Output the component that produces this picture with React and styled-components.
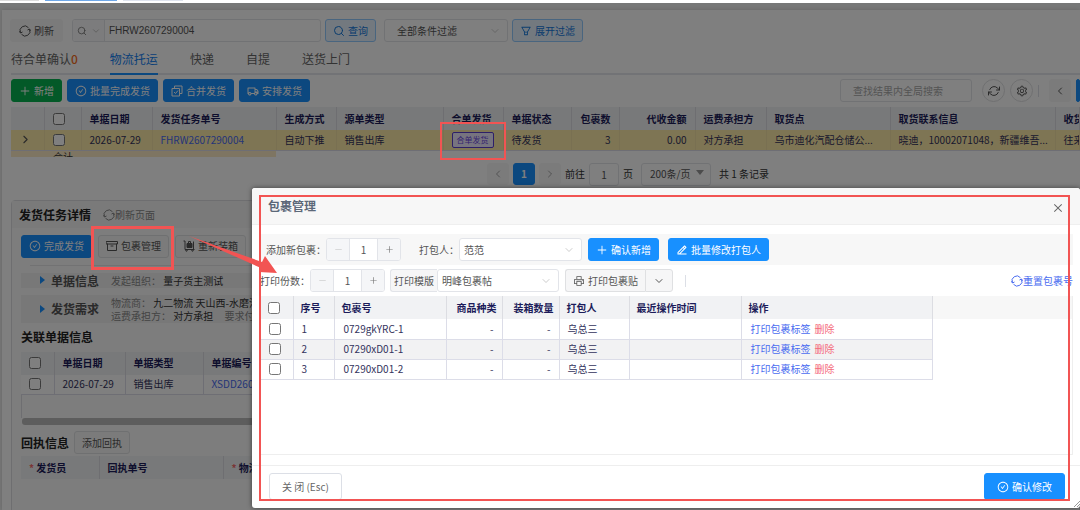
import React, { Component } from 'react';
import styled, { createGlobalStyle } from 'styled-components';
import {
    AiOutlineCheckCircle,
    AiOutlineClose,
    AiOutlineFilter,
    AiOutlinePlus,
    AiOutlineMinus,
    AiOutlinePrinter,
    AiOutlineSetting
} from 'react-icons/ai';
import { RiEdit2Line, RiTruckLine } from 'react-icons/ri';
import { FiArchive, FiChevronDown, FiChevronLeft, FiChevronRight, FiRefreshCw, FiSearch } from 'react-icons/fi';

const GlobalStyle = createGlobalStyle`
    * { box-sizing: border-box; }
    body {
        margin: 0;
        font-family: "Noto Sans CJK SC", sans-serif;
        font-size: 10px;
        line-height: 16px;
        color: #333;
    }
    button, input, select { font: inherit; color: inherit; margin: 0; }
    a { color: #4a6cf0; text-decoration: none; }
`;

const Shell = styled.div`
    display: flex;
    flex-direction: column;
    height: 100vh;
    overflow: hidden;
    background: #fff;
`;

const TabStrip = styled.nav`
    display: flex;
    gap: 6px;
    height: 3px;
    flex: none;
`;

const TabEdge = styled.span`
    width: ${props => props.width};
    height: 1px;
    background: ${props => props.color};
`;

const Workspace = styled.main`
    position: relative;
    flex: 1;
    min-height: 0;
    overflow: hidden;
    padding: 7px 0 0 2px;
    background: #eef0f0;
`;

const Page = styled.div`
    height: 100%;
    padding-left: 8px;
    background: #fff;
    box-shadow: 0 0 4px #ccc;
`;

const Bar = styled.div`
    display: flex;
    align-items: center;
    gap: ${props => props.gap || '5px'};
    padding: ${props => props.pad || '0'};
`;

const tones = {
    primary: 'color: #fff; background: #1890ff; border-color: #1890ff;',
    success: 'color: #fff; background: #07b350; border-color: #07b350;',
    soft: 'color: #1478dc; background: #e6f3ff; border-color: #93caff;',
    plain: 'color: #555; background: #f6f6f7; border-color: #dfe0e2;',
    flat: 'color: #555; background: #f6f6f7; border-color: #f6f6f7;',
    white: 'color: #666; background: #fff; border-color: #dcdfe6;'
};

const Button = styled.button`
    display: inline-flex;
    align-items: center;
    justify-content: center;
    gap: 3px;
    flex: none;
    height: ${props => props.$height || '23px'};
    padding: 0 ${props => props.$pad || '7px'};
    border: 1px solid;
    border-radius: 3px;
    white-space: nowrap;
    ${props => tones[props.$tone || 'plain']}
    svg { width: 12px; height: 12px; }
`;

const RoundButton = styled(Button)`
    width: 23px;
    padding: 0;
    border-radius: 50%;
    background: #fff;
`;

const SplitButton = styled.div`
    display: flex;
    flex: none;
    button:first-child { border-right: 0; border-radius: 3px 0 0 3px; }
    button:last-child { border-radius: 0 3px 3px 0; }
`;

const Group = styled.div`
    display: flex;
    align-items: center;
    flex: none;
    height: 23px;
    width: ${props => props.width || 'auto'};
    border: 1px solid #e2e4e9;
    border-radius: 3px;
    background: #fff;
    overflow: hidden;
`;

const SearchKind = styled.button`
    display: flex;
    align-items: center;
    justify-content: center;
    gap: 4px;
    width: 32px;
    height: 100%;
    padding: 0;
    border: 0;
    border-right: 1px solid #e2e4e9;
    background: #f9f9fa;
    color: #777;
`;

const TextInput = styled.input`
    flex: 1;
    min-width: 0;
    height: 100%;
    padding: 0 ${props => props.$pad || '4px'};
    border: 0;
    outline: 0;
    background: none;
    color: #555;
    font-family: ${props => (props.$latin ? '"Liberation Sans", sans-serif' : 'inherit')};
    text-align: ${props => props.$align || 'left'};
    &::placeholder { color: #a8a8a8; }
`;

const SelectBox = styled.div`
    position: relative;
    flex: none;
    width: ${props => props.width};
    height: 23px;
    svg {
        position: absolute;
        right: 7px;
        top: 6px;
        color: #999;
        pointer-events: none;
    }
`;

const NativeSelect = styled.select`
    appearance: none;
    width: 100%;
    height: 100%;
    padding: 0 ${props => props.$pad || '4px'};
    border: 1px solid #e2e4e9;
    border-radius: 3px;
    background: #fff;
    color: #555;
`;

const Tabs = styled.nav`
    display: flex;
    gap: 32px;
    height: 33px;
    border-bottom: 2px solid #e4e7ed;
    margin-left: 1px;
`;

const Tab = styled.a`
    height: 33px;
    font-size: 12px;
    line-height: 33px;
    color: ${props => (props.$active ? '#1280f0' : '#666')};
    border-bottom: 2px solid ${props => (props.$active ? '#1890ff' : 'transparent')};
    b { color: #f56c1c; font-weight: 500; }
`;

const Spacer = styled.div`
    flex: 1;
`;

const Divider = styled.span`
    width: 1px;
    height: 12px;
    margin: 0 ${props => props.gap || '0'};
    background: #dcdfe6;
`;

const Rule = styled.hr`
    height: 1px;
    margin: 7px 0 7px 9px;
    border: 0;
    background: #e4e4e6;
`;

const Table = styled.table`
    width: ${props => props.width || '100%'};
    table-layout: fixed;
    border-collapse: collapse;
`;

const Th = styled.th`
    height: 23px;
    padding: 0 ${props => props.$pad || '8px'};
    overflow: hidden;
    white-space: nowrap;
    text-align: ${props => props.align || 'left'};
    font-weight: 700;
    color: #1c1c5a;
    background: #f1f2f4;
    border-right: 1px solid #dcdde2;
    input { display: block; width: 12px; height: 12px; }
    i { color: #f56c6c; font-style: normal; }
`;

const Td = styled.td`
    height: 20px;
    padding: 0 ${props => props.$pad || '8px'};
    overflow: hidden;
    white-space: nowrap;
    text-align: ${props => props.align || 'left'};
    color: #33335c;
    background: ${props => props.$tint || '#fff'};
    border-right: 1px solid ${props => (props.$tint === '#fdeaa8' ? '#f2e0a4' : '#dcdde8')};
    border-bottom: 1px solid #dcdde8;
    input { display: block; width: 12px; height: 12px; }
    > svg { display: block; color: #555; }
`;

const SummaryRow = styled.div`
    width: 265px;
    height: 6px;
    margin-left: 1px;
    padding-left: 42px;
    overflow: hidden;
    line-height: 12px;
    background: #fdebc4;
`;

const MergeTag = styled.span`
    display: inline-block;
    height: 16px;
    padding: 0 4px;
    border: 1px solid #5a3fd0;
    border-radius: 2px;
    background: #efe9ff;
    color: #6a48e0;
    font-size: 8px;
    line-height: 14px;
    vertical-align: middle;
`;

const Detail = styled.section`
    margin: 14px 0 0 1px;
    height: 400px;
    border: 1px solid #dcdde0;
    border-radius: 4px;
    background: #fbfbfb;
`;

const DetailHead = styled.header`
    display: flex;
    align-items: center;
    gap: 12px;
    height: 27px;
    padding: 2px 7px 0;
    background: #f5f5f5;
    color: #888;
`;

const Heading = styled.h2`
    margin: 0;
    font-size: 12px;
    line-height: 18px;
    font-weight: 700;
    color: #222;
`;

const DetailBody = styled.div`
    padding: 7px 0 0 9px;
`;

const Folds = styled.div`
    display: flex;
    flex-direction: column;
    gap: 7px;
    padding-bottom: 5px;
`;

const Fold = styled.div`
    display: grid;
    grid-template-columns: 78px 1fr;
    align-items: center;
    gap: 12px;
    height: ${props => props.height};
    background: #f0f0f0;
    color: #333;
    line-height: 13px;
    white-space: nowrap;
    overflow: hidden;
    em { font-style: normal; color: #888; }
`;

const FoldTitle = styled.div`
    display: flex;
    align-items: center;
    justify-content: flex-end;
    gap: 4px;
    font-size: 12px;
    font-weight: 700;
    color: #555;
`;

const ScrollBody = styled.div`
    height: 23px;
    border-left: 1px solid #dcdde2;
`;

const ScrollThumb = styled.div`
    height: 7px;
    margin-left: 1px;
    border-radius: 3px;
    background: #bbb;
`;

const Backdrop = styled.div`
    position: absolute;
    inset: 0;
    background: rgba(0, 0, 0, 0.5);
`;

const Modal = styled.section`
    position: absolute;
    left: 252px;
    right: 0;
    top: 188px;
    bottom: 2px;
    display: flex;
    flex-direction: column;
    border-radius: 3px;
    background: #fff;
    box-shadow: 0 0 5px rgba(0, 0, 0, 0.5);
`;

const ModalHead = styled.header`
    display: flex;
    align-items: center;
    justify-content: space-between;
    height: 37px;
    flex: none;
    padding: 0 16px;
    border-bottom: 1px solid #efefef;
    border-radius: 3px 3px 0 0;
    background: #f7f7f7;
`;

const ModalTitle = styled.h1`
    margin: 0;
    font-size: 12px;
    line-height: 18px;
    font-weight: 700;
    color: #5c6879;
`;

const CloseButton = styled.button`
    display: flex;
    padding: 4px 0 0;
    border: 0;
    background: none;
    color: #666;
`;

const ModalBody = styled.div`
    display: flex;
    flex-direction: column;
    flex: 1;
    min-height: 0;
    padding: 9px 7px 0 8px;
`;

const ModalBar = styled.div`
    display: flex;
    align-items: center;
    height: 31px;
    flex: none;
    padding-left: ${props => (props.$shade ? '6px' : '0')};
    background: ${props => (props.$shade ? '#f7f7f7' : '#fff')};
    color: #555;
`;

const StepButton = styled.button`
    display: flex;
    align-items: center;
    justify-content: center;
    width: 23px;
    height: 100%;
    padding: 0;
    border: 0;
    background: #f5f6f8;
    color: ${props => (props.disabled ? '#bbb' : '#777')};
    &:first-child { border-right: 1px solid #e2e4e9; }
    &:last-child { border-left: 1px solid #e2e4e9; }
`;

const Addon = styled.label`
    height: 23px;
    padding: 0 3px;
    line-height: 21px;
    border: 1px solid #e2e4e9;
    border-right: 0;
    border-radius: 3px 0 0 3px;
    background: #f6f6f7;
`;

const Gap = styled.span`
    flex: none;
    width: ${props => props.width};
`;

const ResetLink = styled.a`
    display: flex;
    align-items: center;
`;

const Grid = styled.div`
    flex: 1;
    min-height: 0;
    border-right: 1px solid #eee;
    border-bottom: 1px solid #eee;
    background: linear-gradient(#f7f7f7 23px, #fff 23px);
    a + a { margin-left: 4px; color: #f56c7c; }
`;

const ModalFoot = styled.footer`
    display: flex;
    justify-content: space-between;
    flex: none;
    height: 43px;
    margin-top: 10px;
    padding: 7px 15px 0 17px;
    border-top: 1px solid #eee;
`;

const Mark = styled.div`
    position: absolute;
    left: ${props => props.$left};
    top: ${props => props.$top};
    right: ${props => props.$right || 'auto'};
    bottom: ${props => props.$bottom || 'auto'};
    width: ${props => props.$width || 'auto'};
    height: ${props => props.$height || 'auto'};
    border: ${props => props.$line || '3px'} solid #f25453;
    pointer-events: none;
`;

const Arrow = styled.svg`
    position: absolute;
    left: 185px;
    top: 230px;
    pointer-events: none;
`;

const Grip = styled.svg`
    position: absolute;
    right: 0;
    bottom: 1px;
`;

const CycleIcon = ({ size = 12 }) => (
    <svg width={size} height={size} viewBox="0 0 24 24" fill="none" stroke="currentColor" strokeWidth="2">
        <path d="M3 15.5A9.5 9.5 0 0 1 19 5.5M21 8.5A9.5 9.5 0 0 1 5 18.5" />
        <path d="M0.5 12.5L3 16l4-2M23.5 11.5L21 8l-4 2" />
    </svg>
);

const MergeIcon = () => (
    <svg viewBox="0 0 24 24" fill="none" stroke="currentColor" strokeWidth="2">
        <path d="M7 6V2h15v15h-4M2 7h15v15H2zM6 14l3 3 5-6" />
    </svg>
);

const LuggageIcon = () => (
    <svg viewBox="0 0 24 24" fill="none" stroke="currentColor" strokeWidth="2">
        <path d="M1 2h3v17h19M21 3v16" />
        <path d="M8 7h10v8H8z" fill="currentColor" />
        <path d="M11 6V3h4v3" />
        <circle cx="7" cy="21" r="1.5" />
        <circle cx="19" cy="21" r="1.5" />
    </svg>
);

const Triangle = ({ down }) => (
    <svg width="8" height="8" viewBox="0 0 8 8" fill={down ? '#999' : '#1890ff'}>
        <path d={down ? 'M0 1h8L4 6z' : 'M1 0v8l5-4z'} />
    </svg>
);

const Select = ({ label, width, pad, children, down }) => (
    <SelectBox width={width}>
        <NativeSelect aria-label={label} $pad={pad}><option>{children}</option></NativeSelect>
        {down ? <Triangle down /> : <FiChevronDown size={12} strokeWidth={1} />}
    </SelectBox>
);

const Stepper = ({ id }) => (
    <Group width="75px">
        <StepButton disabled aria-label="减少"><AiOutlineMinus size={9} /></StepButton>
        <TextInput id={id} defaultValue="1" $align="center" />
        <StepButton aria-label="增加"><AiOutlinePlus size={9} /></StepButton>
    </Group>
);

const Cols = ({ widths }) => (
    <colgroup>
        {widths.map((width, index) => <col key={index} style={{ width: width || 'auto' }} />)}
    </colgroup>
);

const yellow = '#fdeaa8';

const TaskTable = () => (
    <Table>
        <Cols widths={[33, 37, 71, 124, 60, 107, 60, 68, 48, 76, 71, 124, 165, null]} />
        <thead>
            <tr>
                <Th /><Th><input type="checkbox" aria-label="全选" /></Th>
                <Th>单据日期</Th><Th>发货任务单号</Th><Th>生成方式</Th><Th>源单类型</Th>
                <Th>合单发货</Th><Th>单据状态</Th><Th align="right">包裹数</Th><Th align="right">代收金额</Th>
                <Th>运费承担方</Th><Th>取货点</Th><Th>取货联系信息</Th><Th>收货点</Th>
            </tr>
        </thead>
        <tbody>
            <tr>
                <Td $tint={yellow}><FiChevronRight size={13} /></Td>
                <Td $tint={yellow}><input type="checkbox" aria-label="选择" /></Td>
                <Td $tint={yellow}>2026-07-29</Td>
                <Td $tint={yellow}><a href="#task">FHRW2607290004</a></Td>
                <Td $tint={yellow}>自动下推</Td>
                <Td $tint={yellow}>销售出库</Td>
                <Td $tint={yellow}><MergeTag>合单发货</MergeTag></Td>
                <Td $tint={yellow}>待发货</Td>
                <Td $tint={yellow} align="right">3</Td>
                <Td $tint={yellow} align="right">0.00</Td>
                <Td $tint={yellow}>对方承担</Td>
                <Td $tint={yellow}>乌市迪化汽配仓储公...</Td>
                <Td $tint={yellow}>晓迪，10002071048，新疆维吾...</Td>
                <Td $tint={yellow}>往来</Td>
            </tr>
        </tbody>
    </Table>
);

const TaskList = () => (
    <>
        <Bar pad="9px 0 0" gap="4px">
            <Button $tone="flat" $pad="8px"><CycleIcon />刷新</Button>
            <Gap width="1px" />
            <Group width="249px">
                <SearchKind aria-label="搜索类型">
                    <FiSearch size={10} /><FiChevronDown size={10} strokeWidth={1} />
                </SearchKind>
                <TextInput aria-label="单号" defaultValue="FHRW2607290004" $latin />
            </Group>
            <Button $tone="soft"><FiSearch />查询</Button>
            <Gap width="0" />
            <Select label="过滤" width="124px" pad="12px">全部条件过滤</Select>
            <Button $tone="soft"><AiOutlineFilter />展开过滤</Button>
        </Bar>
        <Tabs>
            <Tab href="#merge">待合单确认<b>0</b></Tab>
            <Tab href="#logistics" $active>物流托运</Tab>
            <Tab href="#express">快递</Tab>
            <Tab href="#pickup">自提</Tab>
            <Tab href="#door">送货上门</Tab>
        </Tabs>
        <Bar pad="4px 0 5px 1px">
            <Button $tone="success"><AiOutlinePlus />新增</Button>
            <Button $tone="primary"><AiOutlineCheckCircle />批量完成发货</Button>
            <Button $tone="primary"><MergeIcon />合并发货</Button>
            <Button $tone="primary"><RiTruckLine />安排发货</Button>
            <Spacer />
            <Group width="132px"><TextInput aria-label="查找" placeholder="查找结果内全局搜索" $pad="12px" /></Group>
            <Gap width="0" />
            <RoundButton aria-label="刷新"><FiRefreshCw /></RoundButton>
            <RoundButton aria-label="设置"><AiOutlineSetting /></RoundButton>
            <Divider />
            <Gap width="0" />
            <Button $tone="flat" $pad="4px" aria-label="上一页"><FiChevronLeft /></Button>
            <Button $tone="primary" $pad="1px" aria-label="第一页" />
        </Bar>
        <Bar pad="0 0 0 1px"><TaskTable /></Bar>
        <SummaryRow>合计</SummaryRow>
        <Bar pad="6px 0 0 477px" gap="4px">
            <Button $tone="flat" $height="22px" $pad="4px" aria-label="上一页"><FiChevronLeft strokeWidth={1} /></Button>
            <Button $tone="primary" $height="22px"><b>1</b></Button>
            <Button $tone="flat" $height="22px" $pad="4px" aria-label="下一页"><FiChevronRight strokeWidth={1} /></Button>
            <label htmlFor="goto">前往</label>
            <Group width="30px"><TextInput id="goto" defaultValue="1" $align="center" /></Group>
            <span>页</span>
            <Gap width="0" />
            <Select label="每页条数" width="70px" pad="8px" down>200条/页</Select>
            <Gap width="0" />
            <span>共 1 条记录</span>
        </Bar>
    </>
);

const TaskDetail = () => (
    <Detail>
        <DetailHead>
            <Heading>发货任务详情</Heading>
            <Bar gap="0"><CycleIcon />刷新页面</Bar>
        </DetailHead>
        <DetailBody>
            <Bar gap="6px">
                <Button $tone="primary"><AiOutlineCheckCircle />完成发货</Button>
                <Button><FiArchive />包裹管理</Button>
                <Button><LuggageIcon />重新装箱</Button>
            </Bar>
            <Rule />
            <Folds>
                <Fold height="15px">
                    <FoldTitle><Triangle />单据信息</FoldTitle>
                    <div><em>发起组织：</em> 量子货主测试</div>
                </Fold>
                <Fold height="28px">
                    <FoldTitle><Triangle />发货需求</FoldTitle>
                    <div>
                        <em>物流商：</em> 九二物流 天山西-水磨沟<br />
                        <em>运费承担方：</em> 对方承担 &nbsp; &nbsp; <em>要求付款方式：</em>
                    </div>
                </Fold>
            </Folds>
            <Heading>关联单据信息</Heading>
            <Bar pad="6px 0 0">
                <Table>
                    <Cols widths={[33, 71, 78, null]} />
                    <thead>
                        <tr>
                            <Th><input type="checkbox" aria-label="全选" /></Th>
                            <Th>单据日期</Th><Th>单据类型</Th><Th>单据编号</Th>
                        </tr>
                    </thead>
                    <tbody>
                        <tr>
                            <Td><input type="checkbox" aria-label="选择" /></Td>
                            <Td>2026-07-29</Td><Td>销售出库</Td><Td><a href="#source">XSDD2607290003</a></Td>
                        </tr>
                    </tbody>
                </Table>
            </Bar>
            <ScrollBody />
            <ScrollThumb />
            <Bar pad="6px 0 2px">
                <Heading>回执信息</Heading>
                <Button>添加回执</Button>
            </Bar>
            <Table>
                <Cols widths={[78, 124, null]} />
                <thead>
                    <tr><Th><i>*</i> 发货员</Th><Th>回执单号</Th><Th><i>*</i> 物流单号</Th></tr>
                </thead>
            </Table>
        </DetailBody>
    </Detail>
);

const parcels = ['0729gkYRC-1', '07290xD01-1', '07290xD01-2'];

const ParcelTable = () => (
    <Table width="673px">
        <Cols widths={[33, 41, 112, 56, 57, 70, 112, null]} />
        <thead>
            <tr>
                <Th><input type="checkbox" aria-label="全选" /></Th>
                <Th $pad="7px">序号</Th><Th $pad="7px">包裹号</Th>
                <Th $pad="5px" align="right">商品种类</Th><Th $pad="5px" align="right">装箱数量</Th>
                <Th $pad="7px">打包人</Th><Th $pad="7px">最近操作时间</Th><Th $pad="7px">操作</Th>
            </tr>
        </thead>
        <tbody>
            {parcels.map((parcel, index) => {
                const tint = index % 2 ? '#f2f2f3' : '#fff';
                return (
                    <tr key={parcel}>
                        <Td $tint={tint} $pad="9px"><input type="checkbox" aria-label={parcel} /></Td>
                        <Td $tint={tint}>{index + 1}</Td>
                        <Td $tint={tint} $pad="9px">{parcel}</Td>
                        <Td $tint={tint} align="right">-</Td>
                        <Td $tint={tint} align="right">-</Td>
                        <Td $tint={tint}>乌总三</Td>
                        <Td $tint={tint} />
                        <Td $tint={tint} $pad="9px"><a href="#print">打印包裹标签</a><a href="#remove">删除</a></Td>
                    </tr>
                );
            })}
        </tbody>
    </Table>
);

const ParcelModal = ({ onClose }) => (
    <Modal role="dialog" aria-labelledby="parcel-title">
        <ModalHead>
            <ModalTitle id="parcel-title">包裹管理</ModalTitle>
            <CloseButton aria-label="关闭" onClick={onClose}><AiOutlineClose size={12} /></CloseButton>
        </ModalHead>
        <ModalBody>
            <ModalBar $shade>
                <label htmlFor="add-count">添加新包裹：</label>
                <Stepper id="add-count" />
                <Gap width="18px" />
                <span>打包人：</span>
                <Select label="打包人" width="123px">范范</Select>
                <Gap width="6px" />
                <Button $tone="primary"><AiOutlinePlus />确认新增</Button>
                <Gap width="9px" />
                <Button $tone="primary"><RiEdit2Line />批量修改打包人</Button>
            </ModalBar>
            <ModalBar>
                <label htmlFor="print-count">打印份数：</label>
                <Stepper id="print-count" />
                <Gap width="5px" />
                <Addon>打印模版</Addon>
                <Select label="打印模版" width="122px">明峰包裹帖</Select>
                <Gap width="6px" />
                <SplitButton>
                    <Button><AiOutlinePrinter />打印包裹贴</Button>
                    <Button aria-label="更多"><FiChevronDown strokeWidth={2} /></Button>
                </SplitButton>
                <Divider gap="12px" />
                <Spacer />
                <ResetLink href="#reset"><CycleIcon />重置包裹号</ResetLink>
            </ModalBar>
            <Grid><ParcelTable /></Grid>
        </ModalBody>
        <ModalFoot>
            <Button $tone="white" $height="27px" $pad="12px" onClick={onClose}>关 闭 (Esc)</Button>
            <Button $tone="primary" $height="27px" $pad="12px"><AiOutlineCheckCircle />确认修改</Button>
        </ModalFoot>
        <Grip width="6" height="6" stroke="#999"><path d="M0 6L6 0M3 6l3-3" /></Grip>
        <Mark $left="7px" $top="7px" $right="10px" $bottom="7px" $line="2px" />
    </Modal>
);

class App extends Component {
    constructor(props) {
        super(props);
        this.state = {
            isModalOpen: true
        }
        this.handleClose = this.handleClose.bind(this);
    }

    handleClose() {
        this.setState({ isModalOpen: false })
    }

    render() {
        return (
            <Shell>
                <GlobalStyle />
                <TabStrip>
                    <TabEdge width="39px" color="#ddd" />
                    <TabEdge width="72px" color="#6fa8e8" />
                    <TabEdge width="60px" color="#dfe4ee" />
                </TabStrip>
                <Workspace>
                    <Page>
                        <TaskList />
                        <TaskDetail />
                    </Page>
                    {this.state.isModalOpen && <Backdrop />}
                </Workspace>
                {this.state.isModalOpen && (
                    <>
                        <ParcelModal onClose={this.handleClose} />
                        <Mark $left="440px" $top="122px" $width="66px" $height="38px" $line="2px" />
                        <Mark $left="91px" $top="226px" $width="83px" $height="44px" />
                        <Arrow width="95" height="46" fill="#f25453">
                            <path d="M4 6L77 32l3-6 12 17-18-1 2-4z" />
                        </Arrow>
                    </>
                )}
            </Shell>
        );
    }
}

export default App;
